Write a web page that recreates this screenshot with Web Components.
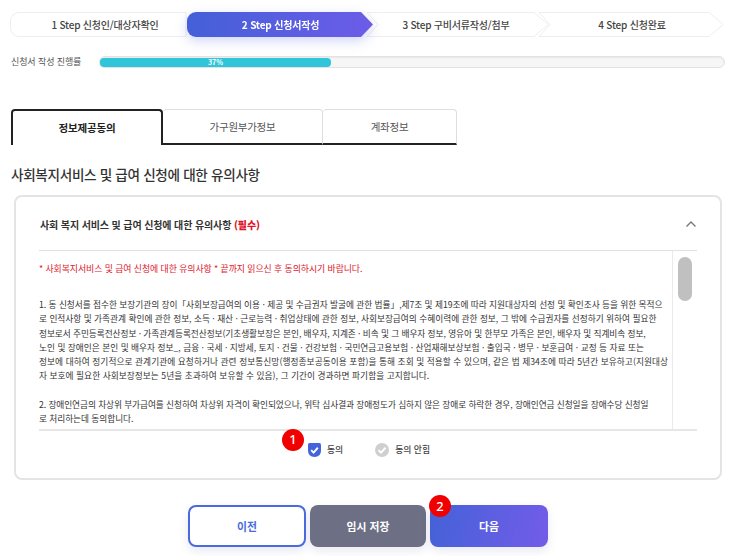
<!DOCTYPE html>
<html lang="ko">
<head>
<meta charset="utf-8">
<title>신청서작성</title>
<style>
  html, body { margin: 0; height: 556px; overflow: hidden; background: #fff; }
  body { font-family: "Noto Sans CJK KR", "Noto Sans", sans-serif; color: #222; }
</style>
</head>
<body>
<apply-page>
  <step-bar slot="steps">
    <step-item kind="first">1 Step 신청인/대상자확인</step-item>
    <step-item kind="active">2 Step 신청서작성</step-item>
    <step-item kind="mid">3 Step 구비서류작성/첨부</step-item>
    <step-item kind="last">4 Step 신청완료</step-item>
  </step-bar>
  <progress-row slot="progress" label="신청서 작성 진행률" value="37"></progress-row>
  <tab-bar slot="tabs">
    <tab-item active style="width:152px">정보제공동의</tab-item>
    <tab-item style="width:160px">가구원부가정보</tab-item>
    <tab-item style="width:134px">계좌정보</tab-item>
  </tab-bar>
  <span slot="heading">사회복지서비스 및 급여 신청에 대한 유의사항</span>
  <notice-card slot="card">
    <span slot="title">사회 복지 서비스 및 급여 신청에 대한 유의사항 <b style="color:#e0162b">(필수)</b></span>
    <notice-text>
      <p class="red">* 사회복지서비스 및 급여 신청에 대한 유의사항 * 끝까지 읽으신 후 동의하시기 바랍니다.</p>
      <p><span style="letter-spacing:-.04px">1. 동 신청서를 접수한 보장기관의 장이「사회보장급여의 이용 · 제공 및 수급권자 발굴에 관한 법률」,제7조 및 제19조에 따라 지원대상자의 선정 및 확인조사 등을 위한 목적으</span><br><span style="letter-spacing:-.015px">로 인적사항 및 가족관계 확인에 관한 정보, 소득 · 재산 · 근로능력 · 취업상태에 관한 정보, 사회보장급여의 수혜이력에 관한 정보, 그 밖에 수급권자를 선정하기 위하여 필요한</span><br><span style="letter-spacing:-.08px">정보로서 주민등록전산정보 · 가족관계등록전산정보(기초생활보장은 본인, 배우자, 지계존 · 비속 및 그 배우자 정보, 영유아 및 한부모 가족은 본인, 배우자 및 직계비속 정보,</span><br><span style="letter-spacing:0">노인 및 장애인은 본인 및 배우자 정보_, 금융 · 국세 · 지방세, 토지 · 건물 · 건강보험 · 국민연금고용보험 · 산업재해보상보험 · 출입국 · 병무 · 보훈급여 · 교정 등 자료 또는</span><br><span style="letter-spacing:.06px">정보에 대하여 정기적으로 관계기관에 요청하거나 관련 정보통신망(행정종보공동이용 포함)을 통해 조회 및 적용할 수 있으며, 같은 법 제34조에 따라 5년간 보유하고(지원대상</span><br><span style="letter-spacing:.04px">자 보호에 필요한 사회보장정보는 5년을 초과하여 보유할 수 있음), 그 기간이 경과하면 파기함을 고지합니다.</span></p>
      <p><span style="letter-spacing:-.09px">2. 장애인연금의 차상위 부가급여를 신청하여 차상위 자격이 확인되었으나, 위탁 심사결과 장애정도가 심하지 않은 장애로 하락한 경우, 장애인연금 신청일을 장애수당 신청일</span><br>로 처리하는데 동의합니다.</p>
    </notice-text>
    <agree-row slot="agree"></agree-row>
  </notice-card>
  <action-bar slot="actions"></action-bar>
</apply-page>

<script>
class ApplyPage extends HTMLElement {
  constructor() {
    super();
    this.attachShadow({ mode: 'open' });
    this.shadowRoot.innerHTML = `
      <style>
        :host { display: flex; flex-direction: column; width: 733px; height: 556px; box-sizing: border-box; padding: 12px 0 0 10px; }
        .heading { margin: 18px 0 0 1px; height: 22px; line-height: 22px; font-size: 13.6px; font-weight: 500; color: #333; letter-spacing: -0.33px; white-space: nowrap; }
        .card { margin: 10px 0 0 4px; }
        .actions { margin-top: 25px; }
      </style>
      <slot name="steps"></slot>
      <slot name="progress"></slot>
      <slot name="tabs"></slot>
      <div class="heading"><slot name="heading"></slot></div>
      <div class="card"><slot name="card"></slot></div>
      <div class="actions"><slot name="actions"></slot></div>
    `;
  }
}

class StepBar extends HTMLElement {
  constructor() {
    super();
    this.attachShadow({ mode: 'open' });
    this.shadowRoot.innerHTML = `
      <style>
        :host { display: flex; height: 26px; width: 723px; }
      </style>
      <slot></slot>
    `;
  }
}

class StepItem extends HTMLElement {
  constructor() {
    super();
    this.attachShadow({ mode: 'open' });
    const kind = this.getAttribute('kind');
    const w = { first: 177, active: 187, mid: 183, last: 186 }[kind];
    const h = 25;
    let d;
    if (kind === 'first') {
      d = `M9 .5H${w - 1}V${h - .5}H9A8.5 8.5 0 0 1 .5 ${h - 9}V9A8.5 8.5 0 0 1 9 .5Z`;
    } else if (kind === 'active') {
      d = `M9 0H${w - 13}L${w - 1} 12.5L${w - 13} ${h}H9A9 9 0 0 1 0 ${h - 9}V9A9 9 0 0 1 9 0Z`;
    } else {
      d = `M1 .5H${w - 15}L${w - .8} 12.5L${w - 15} ${h - .5}H1L12 12.5Z`;
    }
    const fill = kind === 'active' ? 'url(#g)' : '#fff';
    const stroke = kind === 'active' ? 'none' : '#eeeeee';
    this.shadowRoot.innerHTML = `
      <style>
        :host { display: flex; flex: none; align-items: center; justify-content: center; position: relative; width: ${w}px; height: 26px; padding-bottom: 2px; font-size: 10px; font-weight: 500; letter-spacing: -0.2px; color: #444; box-sizing: border-box; }
        :host([kind="first"]) { padding-left: 13px; z-index: 1; }
        :host([kind="active"]) { color: #fff; font-weight: 700; z-index: 3; filter: drop-shadow(0 4px 6px rgba(72,90,220,.25)); }
        :host([kind="mid"]) { margin-left: -8px; padding-right: 3px; z-index: 2; }
        :host([kind="last"]) { margin-left: -11px; padding-left: 2px; z-index: 1; }
        svg { position: absolute; left: 0; top: 0; }
        span { position: relative; white-space: nowrap; }
      </style>
      <svg width="${w}" height="26" viewBox="0 0 ${w} 26">
        <defs><linearGradient id="g" x1="0" x2="1" y1="0" y2="0"><stop offset="0" stop-color="#4460d8"/><stop offset="1" stop-color="#6c5ce8"/></linearGradient></defs>
        <path d="${d}" fill="${fill}" stroke="${stroke}"/>
      </svg>
      <span><slot></slot></span>
    `;
  }
}

class ProgressRow extends HTMLElement {
  constructor() {
    super();
    this.attachShadow({ mode: 'open' });
    const v = this.getAttribute('value');
    this.shadowRoot.innerHTML = `
      <style>
        :host { display: flex; align-items: flex-start; margin-top: 18px; height: 12px; }
        .label { width: 89px; flex: none; box-sizing: border-box; padding: 1px 0 0 1px; font-size: 9px; line-height: 10px; color: #555; letter-spacing: -0.1px; white-space: nowrap; }
        .track { width: 626px; height: 12px; box-sizing: border-box; border: 1px solid #e2e2e2; border-radius: 6px; background: #f6f6f6; padding-top: 1px; box-shadow: inset 0 1px 2px rgba(0,0,0,.06); }
        .bar { height: 9px; width: ${v}%; border-radius: 4px; background: #30c5d9; color: #fff; font-size: 7px; font-weight: 700; text-align: center; line-height: 9px; }
      </style>
      <div class="label">${this.getAttribute('label')}</div>
      <div class="track"><div class="bar">${v}%</div></div>
    `;
  }
}

class TabBar extends HTMLElement {
  constructor() {
    super();
    this.attachShadow({ mode: 'open' });
    this.shadowRoot.innerHTML = `
      <style>
        :host { display: flex; margin: 41px 0 0 1px; height: 36px; }
      </style>
      <slot></slot>
    `;
  }
}

class TabItem extends HTMLElement {
  constructor() {
    super();
    this.attachShadow({ mode: 'open' });
    this.shadowRoot.innerHTML = `
      <style>
        :host { display: flex; flex: none; align-items: center; justify-content: center; box-sizing: border-box; height: 36px; padding-bottom: 1px; font-size: 10.5px; color: #555; letter-spacing: -0.25px; border: 1px solid #dedede; border-bottom: 2px solid #222; border-left: none; border-radius: 4px 4px 0 0; }
        :host([active]) { color: #222; font-weight: 700; border: 2px solid #222; border-bottom: none; border-radius: 4px 4px 0 0; letter-spacing: -0.15px; padding-bottom: 2px; }
      </style>
      <slot></slot>
    `;
  }
}

class NoticeCard extends HTMLElement {
  constructor() {
    super();
    this.attachShadow({ mode: 'open' });
    this.shadowRoot.innerHTML = `
      <style>
        :host { display: block; width: 708px; height: 285px; box-sizing: border-box; border: 2px solid #e4e4e4; border-radius: 8px; padding: 0 23px; background: #fff; }
        header { display: flex; align-items: center; justify-content: space-between; height: 54px; box-sizing: border-box; border-bottom: 1px solid #e2e2e2; padding: 1px 0 0 1px; font-size: 10px; font-weight: 700; color: #333; letter-spacing: -0.12px; }
        ::slotted([slot="title"]) { white-space: nowrap; }
        svg { display: block; }
        .agree { display: flex; justify-content: center; }
      </style>
      <header>
        <slot name="title"></slot>
        <svg width="12" height="8" viewBox="0 0 12 8" fill="none" stroke="#777" stroke-width="1.4"><path d="M1.5 6.5L6 2l4.5 4.5"/></svg>
      </header>
      <slot></slot>
      <div class="agree"><slot name="agree"></slot></div>
    `;
  }
}

class NoticeText extends HTMLElement {
  constructor() {
    super();
    this.attachShadow({ mode: 'open' });
    this.shadowRoot.innerHTML = `
      <style>
        :host { display: flex; height: 178px; border-bottom: 2px solid #e6e6e6; }
        .text { flex: 1; min-width: 0; overflow: hidden; padding-top: 11px; }
        .rail { flex: none; width: 25px; box-sizing: border-box; border-left: 1px solid #eaeaea; padding: 6px 5px 0 5px; }
        .thumb { height: 44px; border-radius: 7px; background: #c0c0c0; }
        ::slotted(p) { margin: 0 0 14.3px; font-size: 8.7px; line-height: 14.3px; color: #333; white-space: nowrap; letter-spacing: -0.06px; }
        ::slotted(p.red) { margin-bottom: 21.7px; font-size: 8.9px; color: #e0162b; }
      </style>
      <div class="text"><slot></slot></div>
      <div class="rail"><div class="thumb"></div></div>
    `;
  }
}

class AgreeRow extends HTMLElement {
  constructor() {
    super();
    this.attachShadow({ mode: 'open' });
    const check = (bg, shape) => `
      <svg width="${shape === 'shield' ? 13 : 14}" height="14" viewBox="0 0 13 13" preserveAspectRatio="none">
        ${shape === 'shield'
          ? `<path d="M0 1.5Q0 0 1.5 0H11.5Q13 0 13 2V7Q13 13 6.5 13Q0 13 0 7Z" fill="${bg}"/>`
          : `<circle cx="6.5" cy="6.5" r="6.5" fill="${bg}"/>`}
        <path d="M3.2 6.6L5.6 9L9.8 4.4" fill="none" stroke="#fff" stroke-width="1.8"/>
      </svg>`;
    this.shadowRoot.innerHTML = `
      <style>
        :host { display: flex; align-items: center; gap: 32px; height: 37px; margin-left: 2px; font-size: 8.8px; font-weight: 500; color: #444; }
        label { display: flex; align-items: center; gap: 6px; position: relative; white-space: nowrap; }
        num-badge { position: absolute; left: -26px; top: -14px; }
        svg { display: block; }
      </style>
      <label><num-badge n="1"></num-badge>${check('#4464dc', 'shield')}동의</label>
      <label>${check('#cfcfcf', 'circle')}동의 안힘</label>
    `;
  }
}

class NumBadge extends HTMLElement {
  constructor() {
    super();
    this.attachShadow({ mode: 'open' });
    this.shadowRoot.innerHTML = `
      <style>
        :host { display: flex; align-items: center; justify-content: center; width: 22px; height: 22px; border-radius: 50%; background: #f00000; color: #fff; font-size: 13px; font-weight: 500; font-family: "Noto Sans", sans-serif; line-height: 1; z-index: 5; }
      </style>
      ${this.getAttribute('n')}
    `;
  }
}

class ActionBar extends HTMLElement {
  constructor() {
    super();
    this.attachShadow({ mode: 'open' });
    this.shadowRoot.innerHTML = `
      <style>
        :host { display: flex; justify-content: center; gap: 4px; width: 716px; }
        .btn { position: relative; box-sizing: border-box; width: 118px; height: 42px; padding-bottom: 1px; display: flex; align-items: center; justify-content: center; border-radius: 8px; font-size: 10.8px; font-weight: 700; box-shadow: 0 4px 10px rgba(70,80,160,.12); }
        .prev { border: 2px solid #4a6ae0; background: #fff; color: #4a6ae0; }
        .save { width: 116px; background: #6d7084; color: #fff; }
        .next { background: linear-gradient(100deg, #4462d8, #735ce8); color: #fff; }
        num-badge { position: absolute; left: -1px; top: -10px; }
      </style>
      <div class="btn prev">이전</div>
      <div class="btn save">임시 저장</div>
      <div class="btn next"><num-badge n="2"></num-badge>다음</div>
    `;
  }
}

customElements.define('num-badge', NumBadge);
customElements.define('apply-page', ApplyPage);
customElements.define('step-bar', StepBar);
customElements.define('step-item', StepItem);
customElements.define('progress-row', ProgressRow);
customElements.define('tab-bar', TabBar);
customElements.define('tab-item', TabItem);
customElements.define('notice-card', NoticeCard);
customElements.define('notice-text', NoticeText);
customElements.define('agree-row', AgreeRow);
customElements.define('action-bar', ActionBar);
</script>
</body>
</html>
